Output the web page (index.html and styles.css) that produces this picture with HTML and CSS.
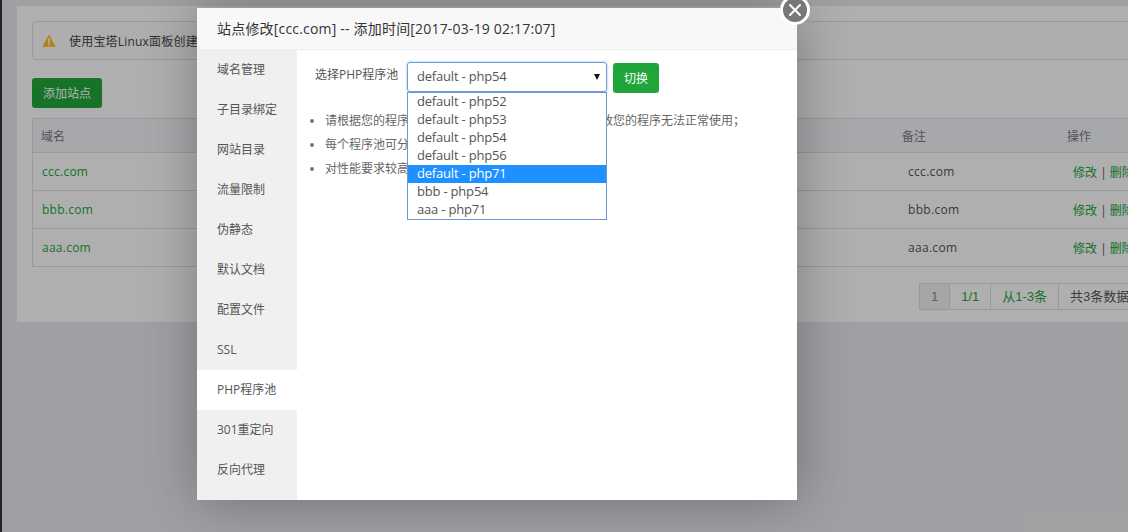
FILE: index.html
```html
<!DOCTYPE html>
<html lang="zh-CN">
<head>
<meta charset="utf-8">
<title>站点修改</title>
<link rel="stylesheet" href="styles.css">
</head>
<body>
<div class="page">
  <aside class="rail"></aside>
  <main class="card">
    <div class="alert">
      <svg class="warn" width="14" height="13" viewBox="0 0 14 13"><path d="M7 0.5 L13.8 12.8 H0.2 Z" fill="#ffbb22"/><rect x="6.2" y="4.2" width="1.6" height="4.8" fill="#fff"/><rect x="6.2" y="9.8" width="1.6" height="1.6" fill="#fff"/></svg>
      <span>使用宝塔Linux面板创建站点时会自动创建权限配置，统一使用www用户。</span>
    </div>
    <button class="add">添加站点</button>
    <div class="table">
      <div class="row head"><span class="c-name">域名</span><span class="c-note">备注</span><span class="c-op">操作</span></div>
      <div class="row"><a class="c-name link">ccc.com</a><span class="c-note note">ccc.com</span><span class="c-op op"><a>修改</a> | <a>删除</a></span></div>
      <div class="row"><a class="c-name link">bbb.com</a><span class="c-note note">bbb.com</span><span class="c-op op"><a>修改</a> | <a>删除</a></span></div>
      <div class="row"><a class="c-name link">aaa.com</a><span class="c-note note">aaa.com</span><span class="c-op op"><a>修改</a> | <a>删除</a></span></div>
    </div>
    <div class="pager">
      <span class="cell cur">1</span><span class="cell green">1/1</span><span class="cell green">从1-3条</span><span class="cell">共3条数据</span>
    </div>
  </main>
</div>
<div class="shade"></div>
<section class="modal">
  <header class="m-head">站点修改[ccc.com] -- 添加时间[2017-03-19 02:17:07]</header>
  <div class="m-body">
    <nav class="tabs">
      <span class="tab">域名管理</span>
      <span class="tab">子目录绑定</span>
      <span class="tab">网站目录</span>
      <span class="tab">流量限制</span>
      <span class="tab">伪静态</span>
      <span class="tab">默认文档</span>
      <span class="tab">配置文件</span>
      <span class="tab">SSL</span>
      <span class="tab active">PHP程序池</span>
      <span class="tab">301重定向</span>
      <span class="tab">反向代理</span>
    </nav>
    <div class="panel">
      <div class="form">
        <label class="lbl">选择PHP程序池</label>
        <div class="select">default - php54<i class="caret"></i></div>
        <button class="switch">切换</button>
      </div>
      <ul class="tips">
        <li>请根据您的程序类型选择程序池，错误的选择可能导致您的程序无法正常使用；</li>
        <li>每个程序池可分配独立的资源；</li>
        <li>对性能要求较高的站点建议使用独立的程序池；</li>
      </ul>
      <div class="list">
        <div class="opt">default - php52</div>
        <div class="opt">default - php53</div>
        <div class="opt">default - php54</div>
        <div class="opt">default - php56</div>
        <div class="opt sel">default - php71</div>
        <div class="opt">bbb - php54</div>
        <div class="opt">aaa - php71</div>
      </div>
    </div>
  </div>
  <button class="close" aria-label="关闭"><svg width="14" height="14" viewBox="0 0 14 14"><path d="M2 2 L12 12 M12 2 L2 12" stroke="#fff" stroke-width="2" stroke-linecap="round"/></svg></button>
</section>
</body>
</html>
```
FILE: styles.css
```css
* { box-sizing: border-box; }
html, body { margin: 0; padding: 0; height: 100%; overflow: hidden; }
body { background: #e4e6ea; font-family: "Open Sans", "Noto Sans CJK SC", sans-serif; font-size: 12px; color: #555; }
.page { display: flex; height: 532px; }
.rail { width: 2px; background: #333; flex: none; }
.card { width: 1200px; flex: none; margin: 6px 0 0 15px; height: 316px; background: #fbfbfb; padding: 15px; }
.alert { height: 39px; width: 1200px; border: 1px solid #ddd; border-radius: 4px; background: #fafafa; display: flex; align-items: center; padding-left: 9px; gap: 13px; color: #444; white-space: nowrap; letter-spacing: .2px; }
.warn { flex: none; }
.add { display: block; margin-top: 18px; width: 70px; height: 30px; border: 0; border-radius: 3px; background: #20a53a; color: #fff; font: inherit; padding: 0; }
.table { margin-top: 10px; width: 1200px; border: 1px solid #ddd; }
.row { display: flex; height: 38px; align-items: center; border-top: 1px solid #ddd; position: relative; }
.row:first-child { border-top: 0; }
.head { height: 33px; background: #f0f1f5; color: #777; }
.c-name { width: 868px; padding-left: 8px; flex: none; }
.c-note { width: 166px; flex: none; }
.head .c-note { padding-left: 1px; }
.c-op { flex: none; }
.link { color: #20a53a; padding-left: 9px; letter-spacing: .25px; }
.note { padding-left: 7px; color: #555; letter-spacing: .3px; }
.op { padding-left: 6px; }
.op a { color: #20a53a; }
.pager { display: flex; margin: 16px 0 0 887px; height: 27px; width: fit-content; border: 1px solid #ddd; white-space: nowrap; }
.cell { padding: 0 11px; line-height: 25px; border-left: 1px solid #ddd; color: #555; font-size: 13px; font-family: "Liberation Sans", "Noto Sans CJK SC", sans-serif; }
.cell:first-child { border-left: 0; }
.cur { background: #eee; color: #888; }
.green { color: #20a53a; }
.shade { position: absolute; inset: 0; background: rgba(0,0,0,.3); }
.modal { position: absolute; left: 197px; top: 8px; width: 600px; height: 492px; background: #fff; box-shadow: 1px 1px 50px rgba(0,0,0,.3); display: flex; flex-direction: column; }
.m-head { height: 42px; background: #f8f8f8; border-bottom: 1px solid #eee; padding-left: 20px; font-size: 14px; line-height: 42px; color: #333; white-space: nowrap; flex: none; letter-spacing: .19px; }
.m-body { display: flex; flex: 1; min-height: 0; }
.tabs { width: 100px; background: #f0f0f0; display: flex; flex-direction: column; flex: none; }
.tab { height: 40px; line-height: 40px; padding-left: 20px; color: #555; }
.active { background: #fff; }
.panel { flex: 1; position: relative; padding: 13px 15px; }
.form { display: flex; align-items: flex-start; height: 30px; }
.lbl { width: 95px; flex: none; padding-left: 3px; line-height: 24px; }
.select { width: 200px; height: 30px; flex: none; margin-top: -1px; border: 1px solid #6c9bd8; border-radius: 3px; box-shadow: 0 0 3px rgba(102,175,233,.7); padding-left: 9px; line-height: 27px; font-size: 13px; letter-spacing: -.2px; position: relative; color: #555; }
.caret { position: absolute; right: 6px; top: 11px; border-style: solid; border-width: 6px 3.5px 0; border-color: #111 transparent transparent; }
.switch { margin-left: 6px; width: 46px; height: 30px; border: 0; border-radius: 3px; background: #20a53a; color: #fff; font: inherit; padding: 0; flex: none; }
.tips { margin: 16px 0 0; padding: 0 0 0 13px; color: #666; }
.tips li { height: 24px; line-height: 24px; white-space: nowrap; }
.tips li::marker { color: #777; }
.list { position: absolute; left: 110px; top: 42px; width: 200px; border: 1px solid #6c95d4; background: #fff; font-size: 13px; letter-spacing: -.2px; color: #555; }
.opt { height: 18px; line-height: 17px; padding-left: 9px; }
.sel { background: #1e90ff; color: #fff; }
.close { position: absolute; right: -13px; top: -13px; width: 30px; height: 30px; padding: 0; border: 3px solid #fff; border-radius: 50%; background: #777; display: flex; align-items: center; justify-content: center; }
```
